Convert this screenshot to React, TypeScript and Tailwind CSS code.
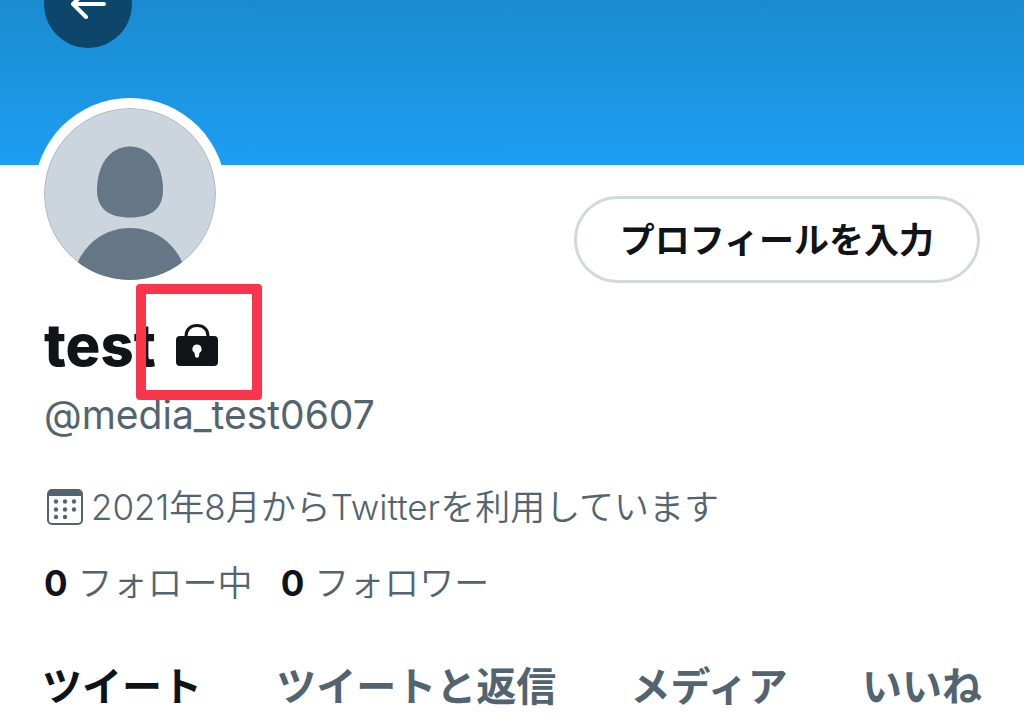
interface TabItem {
  label: string;
  active?: boolean;
}

interface StatProps {
  count: number;
  label: string;
}

const tabs: TabItem[] = [
  { label: "ツイート", active: true },
  { label: "ツイートと返信" },
  { label: "メディア" },
  { label: "いいね" }
];

function Avatar() {
  return (
    <div className="relative -mt-[67px] -ml-2.5 size-48 shrink-0 rounded-full bg-white p-2.5">
      <svg viewBox="0 0 172 172" className="size-full" aria-hidden="true">
        <clipPath id="avatar-clip">
          <circle cx="86" cy="86" r="86" />
        </clipPath>
        <g clipPath="url(#avatar-clip)">
          <circle cx="86" cy="86" r="86" fill="#ccd4de" />
          <path
            d="M86 38.5C107 38.5 119 58 119 82C119 101 107 109.500 86 109.500C65 109.500 53 101 53 82C53 58 65 38.5 86 38.5Z"
            fill="#657786"
          />
          <circle cx="86" cy="177" r="57" fill="#657786" />
          <circle cx="86" cy="86" r="85.5" fill="none" stroke="#657786" strokeOpacity="0.3" />
        </g>
      </svg>
    </div>
  );
}

function LockIcon() {
  return (
    <svg viewBox="0 0 42 42" className="size-[42px]" aria-hidden="true">
      <path
        d="M10 14V12C10 5.5 14.5 1.5 21 1.5S32 5.5 32 12V14"
        fill="none"
        stroke="#0f1419"
        strokeWidth="3"
      />
      <path
        fillRule="evenodd"
        fill="#0f1419"
        d="M4 12H38Q42 12 42 16V38Q42 42 38 42H4Q0 42 0 38V16Q0 12 4 12ZM21 20.5A4.5 4.5 0 0 0 18.5 28.8L19.2 33Q21 34.5 22.8 33L23.5 28.8A4.5 4.5 0 0 0 21 20.5Z"
      />
    </svg>
  );
}

function CalendarIcon() {
  return (
    <svg viewBox="0 0 36 36" className="size-9 shrink-0" aria-hidden="true">
      <rect x="1" y="1" width="34" height="34" rx="4" fill="none" stroke="#536471" strokeWidth="2" />
      <path d="M1 7V5Q1 1 5 1H31Q35 1 35 5V7Z" fill="#536471" />
      <g fill="#536471">
        <circle cx="9" cy="12.5" r="2.2" />
        <circle cx="18" cy="12.5" r="2.2" />
        <circle cx="27" cy="12.5" r="2.2" />
        <circle cx="9" cy="20.5" r="2.2" />
        <circle cx="18" cy="20.5" r="2.2" />
        <circle cx="27" cy="20.5" r="2.2" />
        <circle cx="9" cy="28" r="2.2" />
        <circle cx="18" cy="28" r="2.2" />
      </g>
    </svg>
  );
}

function Stat({ count, label }: StatProps) {
  return (
    <a href="#" className="flex items-center gap-2.5">
      <span className="font-bold text-[#0f1419]">{count}</span>
      <span>{label}</span>
    </a>
  );
}

export default function App() {
  return (
    <div className="overflow-hidden bg-white font-['Inter','Noto_Sans_CJK_JP',sans-serif] text-[#536471]">
      {/* Banner */}
      <header className="flex h-[165px] items-start bg-linear-to-b from-[#1b8bd0] to-[#1d9ef2] px-11">
        <button
          type="button"
          aria-label="戻る"
          className="-mt-10 flex size-22 items-center justify-center rounded-full bg-[#0e466b]"
        >
          <svg viewBox="0 0 36 32" className="h-8 w-9" aria-hidden="true">
            <path
              d="M34 16H3M16 3L3 16L16 29"
              fill="none"
              stroke="#fff"
              strokeWidth="4"
              strokeLinecap="round"
              strokeLinejoin="round"
            />
          </svg>
        </button>
      </header>

      <main className="px-11">
        {/* Avatar and profile button */}
        <div className="flex items-start justify-between">
          <Avatar />
          <button
            type="button"
            className="mt-[31px] h-[87px] rounded-full border-3 border-[#cfd9de] px-[43px] text-[35px] leading-10 font-bold text-[#0f1419]"
          >
            プロフィールを入力
          </button>
        </div>

        {/* Name */}
        <div className="mt-[27px] flex items-center gap-5">
          <h1 className="text-[58px] leading-14 font-extrabold text-[#0f1419]">test</h1>
          <div className="relative">
            <LockIcon />
            <div className="absolute -top-10 -left-10 h-29 w-[126px] rounded-sm border-10 border-[#f9354c]" />
          </div>
        </div>
        <p className="mt-[18px] text-[39px] leading-12">@media_test0607</p>

        {/* Join date */}
        <p className="mt-11 ml-[3px] flex items-center gap-2 text-[35px] leading-12 font-[350]">
          <CalendarIcon />
          2021年8月からTwitterを利用しています
        </p>

        {/* Follow counts */}
        <div className="mt-7 flex gap-7 text-[35px] leading-12 font-[350]">
          <Stat count={0} label="フォロー中" />
          <Stat count={0} label="フォロワー" />
        </div>
      </main>

      {/* Tabs */}
      <nav className="mt-13 flex justify-between px-[42px] text-[40px] leading-14 font-bold">
        {tabs.map((tab) => (
          <a key={tab.label} href="#" className={tab.active ? "text-[#0f1419]" : "text-[#536471]"}>
            {tab.label}
          </a>
        ))}
      </nav>
    </div>
  );
}
